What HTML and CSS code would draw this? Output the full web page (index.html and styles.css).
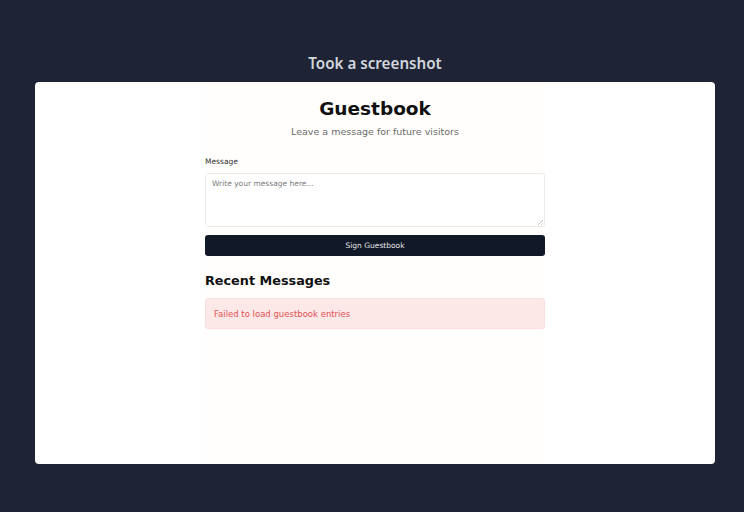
FILE: index.html
```html
<!DOCTYPE html>
<html>
<head>
<meta charset="utf-8">
<link rel="stylesheet" href="styles.css">
</head>
<body>
<div class="stage">
  <div class="caption">Took a screenshot</div>
  <div class="card">
    <div class="column">
      <h1 class="title">Guestbook</h1>
      <p class="subtitle">Leave a message for future visitors</p>
      <form class="form">
        <label class="label" for="msg">Message</label>
        <div class="field">
          <textarea id="msg" class="textarea" placeholder="Write your message here..."></textarea>
          <span class="grip"></span>
        </div>
        <button type="button" class="button">Sign Guestbook</button>
      </form>
      <h2 class="section-title">Recent Messages</h2>
      <div class="error">Failed to load guestbook entries</div>
    </div>
  </div>
</div>
</body>
</html>
```

FILE: styles.css
```css
html, body {
  margin: 0;
  padding: 0;
  background: #1e2435;
  height: 100%;
}
.stage {
  display: flex;
  flex-direction: column;
  align-items: center;
  padding-top: 52px;
  padding-left: 6px;
}
.caption {
  font-family: "Noto Sans", sans-serif;
  font-weight: 600;
  font-size: 15.2px;
  line-height: 22px;
  color: #d3d6dc;
  margin-bottom: 8px;
}
.card {
  width: 680px;
  height: 382px;
  background: #ffffff;
  border-radius: 4px;
  display: flex;
  justify-content: center;
}
.column {
  width: 340px;
  background: #fffefd;
  font-family: "DejaVu Sans", sans-serif;
  padding-top: 14px;
}
.title {
  margin: 0;
  text-align: center;
  font-size: 18.5px;
  line-height: 26px;
  font-weight: bold;
  color: #111111;
}
.subtitle {
  margin: 3px 0 0;
  text-align: center;
  font-size: 9.5px;
  line-height: 14px;
  color: #6b6b6b;
}
.form {
  display: flex;
  flex-direction: column;
  margin-top: 18px;
}
.label {
  font-size: 7.5px;
  line-height: 10px;
  color: #333;
  margin-bottom: 6px;
}
.field {
  position: relative;
  display: flex;
}
.textarea {
  flex: 1;
  height: 54px;
  box-sizing: border-box;
  border: 1px solid #eceae6;
  border-radius: 3px;
  background: #ffffff;
  font-family: "DejaVu Sans", sans-serif;
  font-size: 7.5px;
  padding: 5px 6px;
  resize: none;
  outline: none;
}
.textarea::placeholder {
  color: #7a7a7a;
}
.grip {
  position: absolute;
  right: 2px;
  bottom: 2px;
  width: 5px;
  height: 5px;
  background: linear-gradient(135deg, transparent 45%, #c8c8c8 50%, transparent 60%, transparent 72%, #c8c8c8 77%, transparent 87%);
}
.button {
  margin-top: 8px;
  height: 21px;
  border: none;
  border-radius: 3px;
  background: #111827;
  color: #e8e8ea;
  font-family: "DejaVu Sans", sans-serif;
  font-size: 7.5px;
  padding: 0;
}
.section-title {
  margin: 16px 0 0;
  font-size: 12.8px;
  line-height: 18px;
  font-weight: bold;
  color: #111111;
}
.error {
  margin-top: 8px;
  height: 31px;
  box-sizing: border-box;
  background: #fde8e8;
  border: 1px solid #fbdede;
  border-radius: 3px;
  color: #e05252;
  font-size: 8.5px;
  display: flex;
  align-items: center;
  padding: 0 8px;
}
```
